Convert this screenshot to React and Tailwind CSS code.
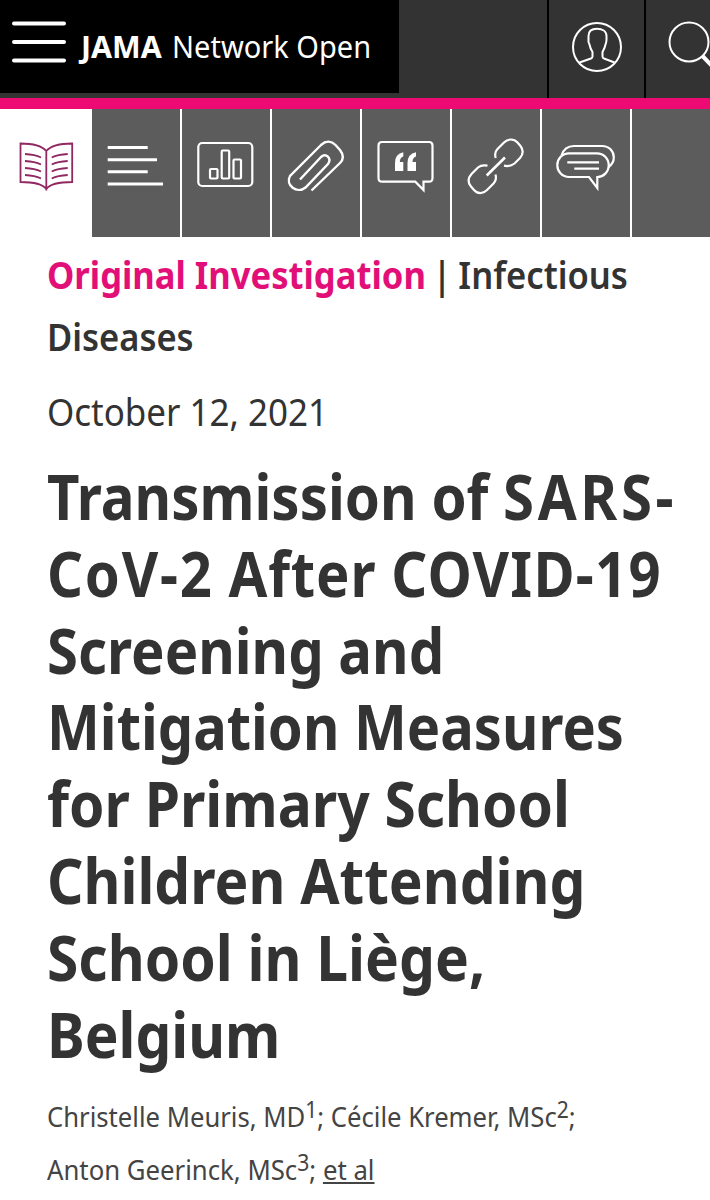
import React from 'react';

const MenuIcon = () => (
  <svg className="w-[54px] h-[42px]" viewBox="0 0 54 42" fill="none" stroke="#fff" strokeWidth="4" strokeLinecap="round">
    <path d="M2 2.5H52M2 21H52M2 39.5H52" />
  </svg>
);

const UserIcon = () => (
  <svg className="w-[50px] h-[50px]" viewBox="0 0 50 50" fill="none" stroke="#fff" strokeWidth="2">
    <circle cx="25" cy="25" r="24" />
    <path d="M7.5 40.5 19 36.5Q20.5 36 20.5 34.5V30C19 27.5 18 25.5 17.5 22.5Q16 20 16.5 17.5V14C16.5 9 20 6.8 25 6.8S34.5 9 34.5 14V17.5Q34.5 20.5 33.5 22.5C33 25.5 31.5 28 30.5 30V34.5Q30.5 36 32 36.5L42.5 40.5" />
  </svg>
);

const SearchIcon = () => (
  <svg className="w-[44px] h-[46px] shrink-0" viewBox="0 0 44 46" fill="none" stroke="#fff">
    <circle cx="21" cy="21" r="19.5" strokeWidth="2" />
    <path d="M34.5 35 44 45" strokeWidth="4" />
  </svg>
);

const BookIcon = () => (
  <svg className="w-[92px] h-[128px]" viewBox="0 0 92 128" fill="none" stroke="#912861" strokeWidth="1.8">
    <path d="M46.3 42C42 37 32 34.5 20.5 34.5V73C31 73 42 74 46.3 80C50.6 74 61.5 73 72.2 73V34.5C61 34.5 50.6 37 46.3 42ZM46.3 42V81.5" />
    <path d="M25 45Q35 45.5 41 48.5M25 52Q35 52.5 41 55.5M25 59Q35 59.5 41 62.5M25 66Q35 66.5 41 69.5" />
    <path d="M67.7 45Q57.7 45.5 51.7 48.5M67.7 52Q57.7 52.5 51.7 55.5M67.7 59Q57.7 59.5 51.7 62.5M67.7 66Q57.7 66.5 51.7 69.5" />
  </svg>
);

const ContentsIcon = () => (
  <svg className="w-[88px] h-[128px]" viewBox="0 0 88 128" fill="none" stroke="#fff" strokeWidth="3">
    <path d="M15.7 38.5H55.7M15.7 50.8H65M15.7 62.8H55.7M15.7 75H71" />
  </svg>
);

const FiguresIcon = () => (
  <svg className="w-[88px] h-[128px]" viewBox="0 0 88 128" fill="none" stroke="#fff" strokeWidth="2.2">
    <rect x="16.3" y="34" width="54" height="43" rx="4" />
    <rect x="28" y="60" width="7.5" height="9.5" rx="1" />
    <rect x="39.7" y="41.5" width="7.5" height="28" rx="1" />
    <rect x="51.5" y="50.5" width="7.5" height="19" rx="1" />
  </svg>
);

const ClipIcon = () => (
  <svg className="w-[88px] h-[128px]" viewBox="0 0 88 128" fill="none" stroke="#fff" strokeWidth="2.4">
    <path d="M28 70.5 49 48C54 43.5 60 49 56 55L33.5 78.5C25 85.5 13 76 18 67L49 36C54 31.5 59.5 32 63.5 36L68 41C71.5 45.5 72 50 68 54L39.5 81.5" />
  </svg>
);

const CiteIcon = () => (
  <svg className="w-[88px] h-[128px]" viewBox="0 0 88 128" fill="none" stroke="#fff" strokeWidth="2.2">
    <path d="M20 33H67Q70.5 33 70.5 36.5V69Q70.5 72.7 67 72.7H61.5V81L53.3 72.7H20Q16.5 72.7 16.5 69V36.5Q16.5 33 20 33Z" />
    <path d="M41.3 43.3V47.5Q37.8 48.5 37.8 53H41.3V62H33V54Q33 45 41.3 43.3ZM54 43.3V47.5Q50.5 48.5 50.5 53H54V62H45.5V54Q45.5 45 54 43.3Z" fill="#fff" stroke="none" />
  </svg>
);

const LinkIcon = () => (
  <svg className="w-[88px] h-[128px]" viewBox="0 0 88 128" fill="none" stroke="#fff" strokeWidth="2.2">
    <path d="M43.7 49C42.5 45 43 42.5 45.5 40L52 33.5C56 29.5 62 29.5 65.5 33.5L68.5 37C71.5 41 71.5 45 68 49L62.5 54.5Q58 58 52 56.7" />
    <path d="M53 48.5 34.7 66.5" strokeWidth="2.6" />
    <path d="M35.5 56.7Q29.5 55.5 26 58.5L19.5 65C16 69 15.5 73.5 19 77.5L22 81C26 85.5 31 85 35 81L41.5 74.5Q45 70.5 43.5 65.5" />
  </svg>
);

const CommentsIcon = () => (
  <svg className="w-[88px] h-[128px]" viewBox="0 0 88 128" fill="none" stroke="#fff" strokeWidth="2.2">
    <path d="M27 44.3H55C61.5 44.3 66.7 49.5 66.7 56.2S61.5 68 55.3 68V79L47 68H27C20.3 68 15.3 62.7 15.3 56.2S20.3 44.3 27 44.3Z" />
    <path d="M19.5 46.5Q22.5 37 32 37H60C67 37 71.8 42 71.8 48.5Q71.8 54.5 66.5 58" />
    <path d="M25.3 53.3H57M32.3 59.7H57" />
  </svg>
);

const tools = [ContentsIcon, FiguresIcon, ClipIcon, CiteIcon, LinkIcon, CommentsIcon];

const Line = ({ className, children }) => (
  <span className={`block origin-left whitespace-nowrap ${className}`}>{children}</span>
);

const Sup = ({ children }) => (
  <sup className="top-[-9px] align-baseline text-[23px] leading-none">{children}</sup>
);

const Header = () => (
  <header className="flex h-[109px] items-start border-b-[11px] border-[#ed0a73] bg-[#333] text-white">
    <div className="flex h-[93px] w-[399px] shrink-0 items-start bg-black pl-3 pt-[21px]">
      <MenuIcon />
      <div className="-mt-px ml-[15px] flex text-[31px] leading-[52px]">
        <Line className="w-[91px] scale-x-[0.98] font-bold">JAMA</Line>
        <Line className="scale-x-[0.936]">Network Open</Line>
      </div>
    </div>
    <div className="ml-auto flex h-[98px] shrink-0">
      <button className="flex w-[97px] justify-center border-l-2 border-black pt-[22px]">
        <UserIcon />
      </button>
      <button className="flex w-[66px] overflow-hidden border-l-2 border-black pl-[22px] pt-[21px]">
        <SearchIcon />
      </button>
    </div>
  </header>
);

const Toolbar = () => (
  <nav className="flex h-32 bg-[#5c5c5c]">
    <button className="w-[92px] bg-white">
      <BookIcon />
    </button>
    {tools.map((Icon, i) => (
      <button key={i} className="w-[90px] border-r-2 border-white">
        <Icon />
      </button>
    ))}
  </nav>
);

const Title = () => (
  <h1 className="mt-[16px] text-[63px] font-bold leading-[76.8px]">
    <Line className="scale-x-[0.895]">
      Transmission of <span className="tracking-[4px]">SARS-</span>
    </Line>
    <Line className="scale-x-[0.892]">
      <span className="tracking-[2px]">CoV-2</span> <span className="tracking-[1px]">After</span>{' '}
      <span className="tracking-[1.4px]">COVID-19</span>
    </Line>
    <Line className="scale-x-[0.893]">Screening and</Line>
    <Line className="scale-x-[0.89]">Mitigation Measures</Line>
    <Line className="scale-x-[0.902]">for Primary School</Line>
    <Line className="scale-x-[0.902]">Children Attending</Line>
    <Line className="scale-x-[0.903]">School in Liège,</Line>
    <Line className="scale-x-[0.9]">Belgium</Line>
  </h1>
);

export default function App() {
  return (
    <div className="h-[1200px] w-[710px] overflow-hidden bg-white font-['Noto_Sans',sans-serif] text-[#333]">
      <Header />
      <Toolbar />
      <main className="pl-[47px]">
        <div className="pt-[6px] text-[38px] font-semibold leading-[62px]">
          <Line className="scale-x-[0.91]">
            <span className="font-bold text-[#e20f78]">Original Investigation</span>
            <span className="[word-spacing:-2.5px]"> | Infectious</span>
          </Line>
          <Line className="scale-x-[0.908]">Diseases</Line>
        </div>
        <div className="mt-[13px] text-[38px] leading-[62px]">
          <Line className="scale-x-[0.92]">October 12, 2021</Line>
        </div>
        <Title />
        <div className="mt-[18px] text-[28px] leading-[53px] text-[#444]">
          <Line className="scale-x-[0.916]">
            Christelle Meuris, MD<Sup>1</Sup>; Cécile Kremer, MSc<Sup>2</Sup>;
          </Line>
          <Line className="scale-x-[0.919]">
            Anton Geerinck, MSc<Sup>3</Sup>; <a className="underline decoration-2 underline-offset-2">et al</a>
          </Line>
        </div>
      </main>
    </div>
  );
}
